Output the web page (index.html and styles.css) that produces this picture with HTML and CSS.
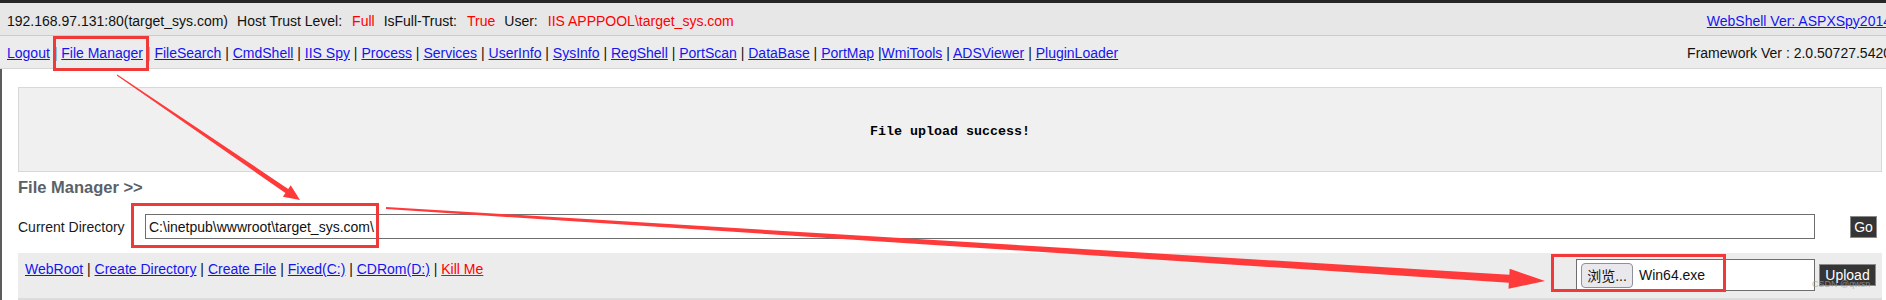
FILE: index.html
```html
<!DOCTYPE html>
<html>
<head>
<meta charset="utf-8">
<title>ASPXSpy</title>
<link rel="stylesheet" href="styles.css">
</head>
<body>
<div class="page">
  <div class="topbar"></div>
  <div class="header">
    <div class="info">
      <span>192.168.97.131:80(target_sys.com)</span>
      <span class="pair"><span>Host Trust Level:</span><span class="val">Full</span></span>
      <span class="pair"><span>IsFull-Trust:</span><span class="val">True</span></span>
      <span class="pair"><span>User:</span><span class="val">IIS APPPOOL\target_sys.com</span></span>
    </div>
    <a class="link" href="#">WebShell Ver: ASPXSpy2014</a>
  </div>
  <div class="nav">
    <div class="links"><a class="link" href="#">Logout</a> | <a class="link" href="#">File Manager</a> | <a class="link" href="#">FileSearch</a> | <a class="link" href="#">CmdShell</a> | <a class="link" href="#">IIS Spy</a> | <a class="link" href="#">Process</a> | <a class="link" href="#">Services</a> | <a class="link" href="#">UserInfo</a> | <a class="link" href="#">SysInfo</a> | <a class="link" href="#">RegShell</a> | <a class="link" href="#">PortScan</a> | <a class="link" href="#">DataBase</a> | <a class="link" href="#">PortMap</a> |<a class="link" href="#">WmiTools</a> | <a class="link" href="#">ADSViewer</a> | <a class="link" href="#">PluginLoader</a></div>
    <div class="fw">Framework Ver : 2.0.50727.5420</div>
  </div>
  <div class="content">
    <div class="msg">File upload success!</div>
    <h2 class="section">File Manager &gt;&gt;</h2>
    <div class="dirrow">
      <span class="dirlabel">Current Directory</span>
      <input class="dirinput" type="text" value="C:\inetpub\wwwroot\target_sys.com\">
      <button class="btn go">Go</button>
    </div>
    <div class="toolbar">
      <div class="tlinks"><a class="link" href="#">WebRoot</a> | <a class="link" href="#">Create Directory</a> | <a class="link" href="#">Create File</a> | <a class="link" href="#">Fixed(C:)</a> | <a class="link" href="#">CDRom(D:)</a> | <a class="link kill" href="#">Kill Me</a></div>
      <div class="upload">
        <div class="file"><span class="browse">浏览...</span><span class="fname">Win64.exe</span></div>
        <button class="btn">Upload</button>
      </div>
    </div>
  </div>
  <svg class="annot" width="1886" height="300" viewBox="0 0 1886 300">
    <rect x="54.5" y="37.5" width="93" height="32" class="box"/>
    <rect x="132.5" y="204.5" width="245" height="42" class="box"/>
    <rect x="1552.5" y="255.5" width="172" height="35" class="box"/>
    <polygon class="arrow" points="117.3,74.6 288.2,188.9 290.7,185.2 300,200 282.9,196.8 285.4,193.1 116.7,75.4"/>
    <polygon class="arrow" points="386.06,207 1509.35,274.7 1509.7,268.7 1545,281 1508.5,288.7 1508.85,282.7 385.94,209"/>
  </svg>
  <div class="watermark">CSDN @qwsn</div>
</div>
</body>
</html>
```

FILE: styles.css
```css
html, body {
  margin: 0;
  padding: 0;
  background: #ffffff;
  overflow: hidden;
}

.page {
  position: relative;
  width: 1896px;
  height: 300px;
  font-family: "Liberation Sans", Arial, sans-serif;
  font-size: 14px;
  color: #111;
}

.topbar {
  height: 3px;
  background: #262626;
}

.header {
  box-sizing: border-box;
  height: 33px;
  padding: 3px 5px 0 7px;
  background: #e7e7e7;
  border-bottom: 1px solid #cbcbcb;
  display: flex;
  align-items: center;
  justify-content: space-between;
  line-height: 16px;
}

.info {
  display: flex;
  gap: 9px;
}

.pair {
  display: flex;
  gap: 10px;
}

.val {
  color: #ff0000;
}

.link {
  color: #1515ee;
  text-decoration: underline;
}

.link.kill {
  color: #ff0000;
}

.nav {
  box-sizing: border-box;
  height: 33px;
  padding: 2px 5px 0 7px;
  background: #ececec;
  border-bottom: 1px solid #d6d6d6;
  display: flex;
  align-items: center;
  justify-content: space-between;
  line-height: 16px;
  white-space: pre;
}

.content {
  box-sizing: border-box;
  height: 231px;
  border-left: 2px solid #5c5c5c;
  padding: 18px 14px 0 16px;
}

.msg {
  box-sizing: border-box;
  height: 85px;
  padding-top: 3px;
  background: #f0f0f0;
  border: 1px solid #d8d8d8;
  display: flex;
  align-items: center;
  justify-content: center;
  font-family: "Liberation Mono", "Courier New", monospace;
  font-weight: bold;
  font-size: 13.33px;
  color: #000;
}

.section {
  margin: 5px 0 0 0;
  font-size: 16.5px;
  line-height: 20px;
  font-weight: bold;
  color: #5a6169;
}

.dirrow {
  margin-top: 17px;
  height: 25px;
  display: flex;
  align-items: center;
}

.dirlabel {
  width: 127px;
  color: #1a1a1a;
}

.dirinput {
  box-sizing: border-box;
  width: 1670px;
  height: 25px;
  margin: 0 0 0 0;
  padding: 0 3px;
  border: 1px solid #6e6e6e;
  border-radius: 0;
  font-family: "Liberation Sans", Arial, sans-serif;
  font-size: 14px;
  color: #111;
  background: #fff;
  outline: none;
}

.btn {
  box-sizing: border-box;
  height: 22px;
  padding: 0 4px;
  background: #353535;
  color: #ffffff;
  border: 1px solid #8a8a8a;
  border-radius: 0;
  font-family: "Liberation Sans", Arial, sans-serif;
  font-size: 14px;
  line-height: 20px;
}

.btn.go {
  margin-left: 35px;
  width: 27px;
  padding: 0;
}

.toolbar {
  box-sizing: border-box;
  margin-top: 14px;
  height: 47px;
  background: #ececec;
  border-bottom: 2px solid #dcdcdc;
  display: flex;
  justify-content: space-between;
  align-items: flex-start;
  padding: 0 6px 0 7px;
}

.tlinks {
  padding-top: 8px;
  line-height: 16px;
  white-space: pre;
}

.upload {
  margin-top: 6px;
  display: flex;
  align-items: center;
  gap: 4px;
}

.upload .btn {
  width: 57px;
  padding: 0;
}

.file {
  box-sizing: border-box;
  width: 239px;
  height: 32px;
  background: #fff;
  border: 1px solid #6e6e6e;
  padding-left: 4px;
  display: flex;
  align-items: center;
  gap: 6px;
}

.browse {
  box-sizing: border-box;
  height: 25px;
  width: 52px;
  border: 1px solid #8f8f9d;
  border-radius: 4px;
  background: #e9e9ed;
  display: flex;
  align-items: center;
  justify-content: center;
  font-family: "Liberation Sans", "Noto Sans CJK SC", sans-serif;
  font-size: 14px;
  color: #111;
}

.fname {
  color: #111;
}

.annot {
  position: absolute;
  left: 0;
  top: 0;
  pointer-events: none;
}

.box {
  fill: none;
  stroke: #f03a3a;
  stroke-width: 3;
}

.arrow {
  fill: #ff3a3a;
}

.watermark {
  position: absolute;
  left: 1812px;
  top: 279px;
  font-size: 9px;
  line-height: 11px;
  color: rgba(160, 160, 160, 0.75);
  pointer-events: none;
}
```
